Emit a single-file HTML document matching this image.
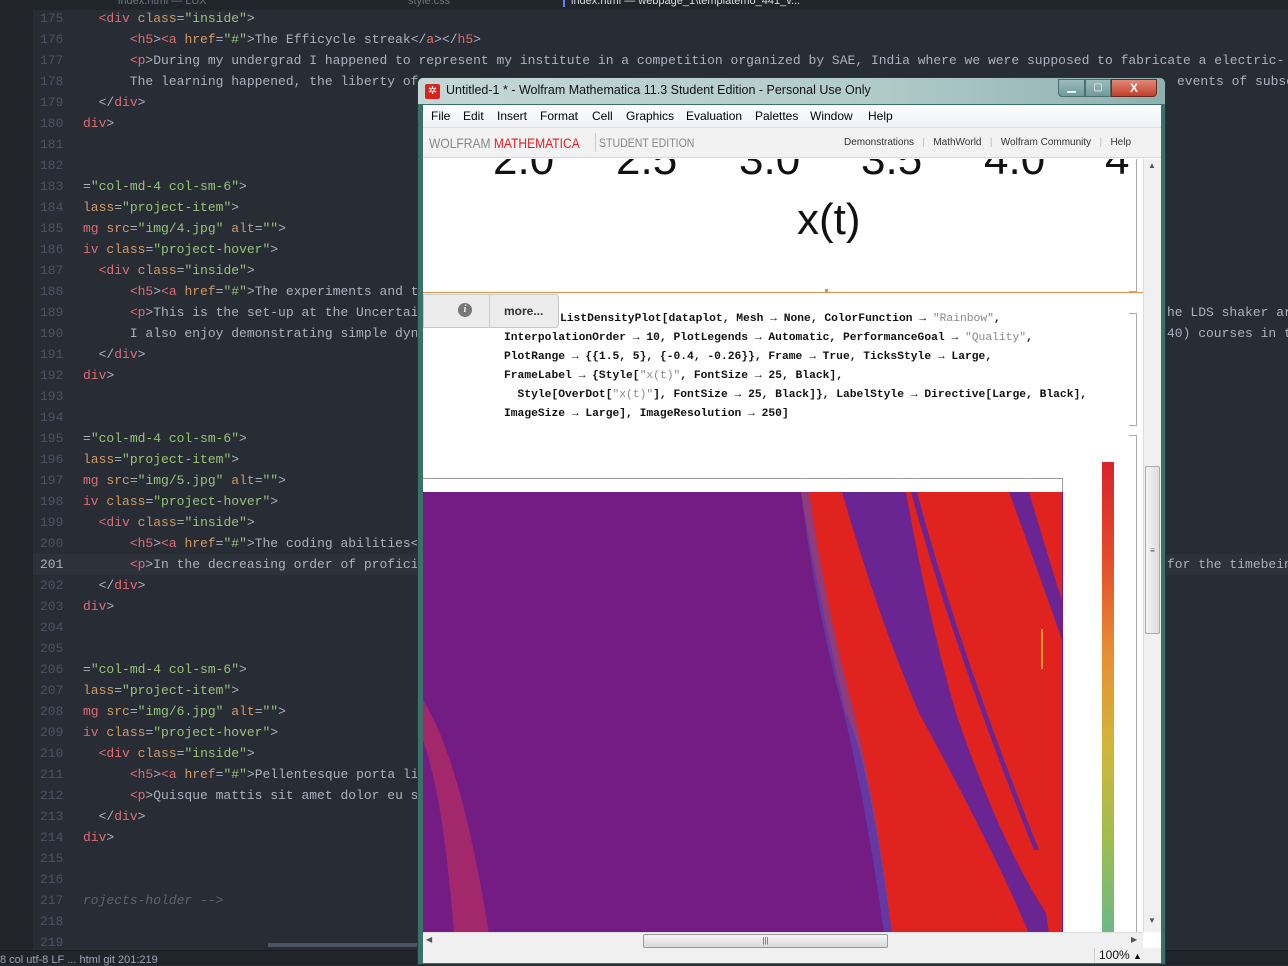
<!DOCTYPE html>
<html><head><meta charset="utf-8"><style>
*{margin:0;padding:0;box-sizing:border-box}
body{width:1288px;height:965px;overflow:hidden;background:#282c34;position:relative;font-family:"Liberation Sans",sans-serif}
.side{position:absolute;left:0;top:0;width:33px;height:950px;background:#21252b}
.tabs{position:absolute;left:33px;top:0;width:1255px;height:10px;background:#21252b;font-size:11px;color:#6b717d;overflow:hidden}
.tabs span{position:absolute;top:-5px}
.code{position:absolute;left:33px;top:8px;width:1255px;font-family:"Liberation Mono",monospace;font-size:13px;color:#abb2bf}
.ln{position:relative;height:21px;line-height:21px;white-space:pre}
.ln .n{position:absolute;left:7px;width:23px;text-align:right;color:#4b5263}
.ln .t{position:absolute;left:50px}
.cur{background:#2c313a}
.cur .n{color:#abb2bf}
.r{color:#e06c75}.o{color:#d19a66}.g{color:#98c379}.c{color:#5c6370;font-style:italic}
.status{position:absolute;left:0;top:950px;width:1288px;height:15px;background:#21252b;border-top:1px solid #181a1f;font-size:11px;color:#9da5b4}
.win{position:absolute;left:417px;top:77px;width:749px;height:888px;background:#3b7169;border:1px solid #1d3a36;border-radius:6px 6px 0 0}
.title{position:absolute;left:0;top:0;width:747px;height:26px;background:linear-gradient(90deg,#c4d7d7,#b2cbcb 60%,#8fb0b0);border-radius:5px 5px 0 0;font-size:12.5px;color:#111}
.inner{position:absolute;left:5px;top:27px;width:738px;height:858px;background:#fff;overflow:hidden}
.menu{position:absolute;left:0;top:0;width:738px;height:22px;background:linear-gradient(#fdfdfe,#eef1f7);font-size:12px;color:#000}
.menu span{position:absolute;top:4px}
.tool{position:absolute;left:0;top:22px;width:738px;height:31px;background:#f2f2f2;border-top:1px solid #dde;border-bottom:1px solid #d6d6d6}
.mono{font-family:"Liberation Mono",monospace;font-weight:bold;font-size:11.3px;color:#111;position:absolute;white-space:pre}
.s{color:#888;font-weight:normal}
.big{position:absolute;top:-24px;font-size:44px;color:#111}
</style></head><body>
<div class="side"></div>
<div class="tabs"><span style="left:85px">index.html — LUX</span><span style="left:375px">style.css</span><span style="left:530px;color:#d7dae0;border-left:2px solid #568af2;padding-left:6px">index.html — webpage_1\templatemo_441_v...</span></div>
<div class="code">
<div class="ln"><span class="n">175</span><span class="t">  <span class="r">&lt;div</span> <span class="o">class</span>=<span class="g">"inside"</span>&gt;</span></div>
<div class="ln"><span class="n">176</span><span class="t">      <span class="r">&lt;h5</span>&gt;<span class="r">&lt;a</span> <span class="o">href</span>=<span class="g">"#"</span>&gt;The Efficycle streak&lt;/<span class="r">a</span>&gt;&lt;/<span class="r">h5</span>&gt;</span></div>
<div class="ln"><span class="n">177</span><span class="t">      <span class="r">&lt;p</span>&gt;During my undergrad I happened to represent my institute in a competition organized by SAE, India where we were supposed to fabricate a electric- ma</span></div>
<div class="ln"><span class="n">178</span><span class="t">      The learning happened, the liberty of</span><span class="t" style="left:1144px">events of subse</span></div>
<div class="ln"><span class="n">179</span><span class="t">  &lt;/<span class="r">div</span>&gt;</span></div>
<div class="ln"><span class="n">180</span><span class="t"><span class="r">div</span>&gt;</span></div>
<div class="ln"><span class="n">181</span></div>
<div class="ln"><span class="n">182</span></div>
<div class="ln"><span class="n">183</span><span class="t">=<span class="g">"col-md-4 col-sm-6"</span>&gt;</span></div>
<div class="ln"><span class="n">184</span><span class="t"><span class="o">lass</span>=<span class="g">"project-item"</span>&gt;</span></div>
<div class="ln"><span class="n">185</span><span class="t"><span class="r">mg</span> <span class="o">src</span>=<span class="g">"img/4.jpg"</span> <span class="o">alt</span>=<span class="g">""</span>&gt;</span></div>
<div class="ln"><span class="n">186</span><span class="t"><span class="r">iv</span> <span class="o">class</span>=<span class="g">"project-hover"</span>&gt;</span></div>
<div class="ln"><span class="n">187</span><span class="t">  <span class="r">&lt;div</span> <span class="o">class</span>=<span class="g">"inside"</span>&gt;</span></div>
<div class="ln"><span class="n">188</span><span class="t">      <span class="r">&lt;h5</span>&gt;<span class="r">&lt;a</span> <span class="o">href</span>=<span class="g">"#"</span>&gt;The experiments and te</span></div>
<div class="ln"><span class="n">189</span><span class="t">      <span class="r">&lt;p</span>&gt;This is the set-up at the Uncertai</span><span class="t" style="left:1134px">he LDS shaker ar</span></div>
<div class="ln"><span class="n">190</span><span class="t">      I also enjoy demonstrating simple dyn</span><span class="t" style="left:1134px">40) courses in t</span></div>
<div class="ln"><span class="n">191</span><span class="t">  &lt;/<span class="r">div</span>&gt;</span></div>
<div class="ln"><span class="n">192</span><span class="t"><span class="r">div</span>&gt;</span></div>
<div class="ln"><span class="n">193</span></div>
<div class="ln"><span class="n">194</span></div>
<div class="ln"><span class="n">195</span><span class="t">=<span class="g">"col-md-4 col-sm-6"</span>&gt;</span></div>
<div class="ln"><span class="n">196</span><span class="t"><span class="o">lass</span>=<span class="g">"project-item"</span>&gt;</span></div>
<div class="ln"><span class="n">197</span><span class="t"><span class="r">mg</span> <span class="o">src</span>=<span class="g">"img/5.jpg"</span> <span class="o">alt</span>=<span class="g">""</span>&gt;</span></div>
<div class="ln"><span class="n">198</span><span class="t"><span class="r">iv</span> <span class="o">class</span>=<span class="g">"project-hover"</span>&gt;</span></div>
<div class="ln"><span class="n">199</span><span class="t">  <span class="r">&lt;div</span> <span class="o">class</span>=<span class="g">"inside"</span>&gt;</span></div>
<div class="ln"><span class="n">200</span><span class="t">      <span class="r">&lt;h5</span>&gt;<span class="r">&lt;a</span> <span class="o">href</span>=<span class="g">"#"</span>&gt;The coding abilities&lt;</span></div>
<div class="ln cur"><span class="n">201</span><span class="t">      <span class="r">&lt;p</span>&gt;In the decreasing order of proficie</span><span class="t" style="left:1134px">for the timebein</span></div>
<div class="ln"><span class="n">202</span><span class="t">  &lt;/<span class="r">div</span>&gt;</span></div>
<div class="ln"><span class="n">203</span><span class="t"><span class="r">div</span>&gt;</span></div>
<div class="ln"><span class="n">204</span></div>
<div class="ln"><span class="n">205</span></div>
<div class="ln"><span class="n">206</span><span class="t">=<span class="g">"col-md-4 col-sm-6"</span>&gt;</span></div>
<div class="ln"><span class="n">207</span><span class="t"><span class="o">lass</span>=<span class="g">"project-item"</span>&gt;</span></div>
<div class="ln"><span class="n">208</span><span class="t"><span class="r">mg</span> <span class="o">src</span>=<span class="g">"img/6.jpg"</span> <span class="o">alt</span>=<span class="g">""</span>&gt;</span></div>
<div class="ln"><span class="n">209</span><span class="t"><span class="r">iv</span> <span class="o">class</span>=<span class="g">"project-hover"</span>&gt;</span></div>
<div class="ln"><span class="n">210</span><span class="t">  <span class="r">&lt;div</span> <span class="o">class</span>=<span class="g">"inside"</span>&gt;</span></div>
<div class="ln"><span class="n">211</span><span class="t">      <span class="r">&lt;h5</span>&gt;<span class="r">&lt;a</span> <span class="o">href</span>=<span class="g">"#"</span>&gt;Pellentesque porta lig</span></div>
<div class="ln"><span class="n">212</span><span class="t">      <span class="r">&lt;p</span>&gt;Quisque mattis sit amet dolor eu se</span></div>
<div class="ln"><span class="n">213</span><span class="t">  &lt;/<span class="r">div</span>&gt;</span></div>
<div class="ln"><span class="n">214</span><span class="t"><span class="r">div</span>&gt;</span></div>
<div class="ln"><span class="n">215</span></div>
<div class="ln"><span class="n">216</span></div>
<div class="ln"><span class="n">217</span><span class="t c">rojects-holder --&gt;</span></div>
<div class="ln"><span class="n">218</span></div>
<div class="ln"><span class="n">219</span></div>
</div>
<div style="position:absolute;left:268px;top:943px;width:150px;height:4px;background:#4b5263"></div>
<div class="status"><span style="position:absolute;left:0;top:3px">8 col  utf-8  LF  ...  html  git  201:219</span></div>

<div class="win">
 <div class="title">
  <div style="position:absolute;left:7px;top:6px;width:15px;height:15px;background:#d8241f;border-radius:2px;color:#fff;font-size:11px;line-height:15px;text-align:center">✲</div>
  <span style="position:absolute;left:28px;top:5px">Untitled-1 * - Wolfram Mathematica 11.3 Student Edition - Personal Use Only</span>
  <div style="position:absolute;left:640px;top:1px;width:27px;height:18px;background:linear-gradient(#9cbcbc,#6f9a9a);border:1px solid #4e6f6f;border-radius:0 0 0 4px;color:#fff;font-size:11px;text-align:center;line-height:14px">▁</div>
  <div style="position:absolute;left:667px;top:1px;width:26px;height:18px;background:linear-gradient(#9cbcbc,#6f9a9a);border:1px solid #4e6f6f;color:#fff;font-size:10px;text-align:center;line-height:16px">▢</div>
  <div style="position:absolute;left:693px;top:1px;width:46px;height:18px;background:linear-gradient(#e08a78,#c2402a);border:1px solid #6c2a20;border-radius:0 0 4px 0;color:#fff;font-size:12px;font-weight:bold;text-align:center;line-height:16px">X</div>
 </div>
 <div class="inner">
  <div class="menu"><span style="left:8px">File</span><span style="left:40px">Edit</span><span style="left:74px">Insert</span><span style="left:117px">Format</span><span style="left:169px">Cell</span><span style="left:203px">Graphics</span><span style="left:263px">Evaluation</span><span style="left:332px">Palettes</span><span style="left:387px">Window</span><span style="left:445px">Help</span></div>
  <div class="tool">
   <span style="position:absolute;left:6px;top:7px;font-size:14px;color:#888;transform:scaleX(0.86);transform-origin:0 0;white-space:nowrap">WOLFRAM <span style="color:#d9232a">MATHEMATICA</span></span>
   <span style="position:absolute;left:172px;top:5px;height:19px;border-left:1px solid #ccc"></span>
   <span style="position:absolute;left:176px;top:8px;font-size:12px;color:#888;transform:scaleX(0.88);transform-origin:0 0;white-space:nowrap">STUDENT EDITION</span>
   <span style="position:absolute;left:421px;top:9px;font-size:10px;color:#333;white-space:nowrap">Demonstrations &nbsp;&nbsp;<span style="color:#bbb">|</span>&nbsp;&nbsp; MathWorld &nbsp;&nbsp;<span style="color:#bbb">|</span>&nbsp;&nbsp; Wolfram Community &nbsp;&nbsp;<span style="color:#bbb">|</span>&nbsp;&nbsp; Help</span>
  </div>
  <div style="position:absolute;left:0;top:54px;width:720px;height:773px;overflow:hidden">
   <span class="big" style="left:-12px">)</span>
   <span class="big" style="left:70px">2.0</span>
   <span class="big" style="left:193px">2.5</span>
   <span class="big" style="left:316px">3.0</span>
   <span class="big" style="left:438px">3.5</span>
   <span class="big" style="left:561px">4.0</span>
   <span class="big" style="left:682px">4</span>
   <div style="position:absolute;left:374px;top:36px;font-size:44px;color:#111">x(t)</div>
   <div style="position:absolute;left:0;top:133px;width:720px;height:1px;background:#e0904a"></div>
   <div style="position:absolute;left:402px;top:130px;width:3px;height:4px;background:#e0904a"></div>
   <div style="position:absolute;left:0;top:135px;width:136px;height:34px;background:#ececec;border:1px solid #c8c8c8;border-radius:0 4px 4px 0"></div>
   <div style="position:absolute;left:66px;top:135px;width:1px;height:34px;background:#ccc"></div>
   <div style="position:absolute;left:35px;top:144px;width:14px;height:14px;border-radius:50%;background:#777;color:#fff;font-size:10px;font-style:italic;font-weight:bold;text-align:center;line-height:14px;font-family:'Liberation Serif',serif">i</div>
   <span style="position:absolute;left:81px;top:145px;font-size:12px;color:#333;font-weight:bold">more...</span>
   <div class="mono" style="left:137px;top:154px">ListDensityPlot[dataplot, Mesh → None, ColorFunction → <span class="s">"Rainbow"</span>,</div>
   <div class="mono" style="left:81px;top:173px">InterpolationOrder → 10, PlotLegends → Automatic, PerformanceGoal → <span class="s">"Quality"</span>,</div>
   <div class="mono" style="left:81px;top:192px">PlotRange → {{1.5, 5}, {-0.4, -0.26}}, Frame → True, TicksStyle → Large,</div>
   <div class="mono" style="left:81px;top:211px">FrameLabel → {Style[<span class="s">"x(t)"</span>, FontSize → 25, Black],</div>
   <div class="mono" style="left:81px;top:230px">  Style[OverDot[<span class="s">"x(t)"</span>], FontSize → 25, Black]}, LabelStyle → Directive[Large, Black],</div>
   <div class="mono" style="left:81px;top:249px">ImageSize → Large], ImageResolution → 250]</div>
   <div style="position:absolute;left:706px;top:0;width:8px;height:133px;border:1px solid #aaa;border-left:none;border-top:none"></div>
   <div style="position:absolute;left:706px;top:154px;width:8px;height:113px;border:1px solid #aaa;border-left:none"></div>
   <div style="position:absolute;left:706px;top:276px;width:8px;height:500px;border:1px solid #aaa;border-left:none;border-bottom:none"></div>
   <div style="position:absolute;left:0;top:319px;width:640px;height:15px;border:1px solid #999;border-left:none;background:#fff"></div>
   <svg style="position:absolute;left:0;top:333px" width="640" height="442" viewBox="424 492 640 442">
    <rect x="424" y="492" width="640" height="442" fill="#731d84"/>
    <path d="M802 492 L1063 492 L1063 934 L893 934 Q870 760 847 713 Q820 600 802 492Z" fill="#e0231f"/>
    <path d="M843 492 L907 492 Q930 620 957 713 Q1000 840 1047 913 L1050 934 L1030 934 Q1000 860 920 713 Q880 620 843 492Z" fill="#6a2592"/>
    <path d="M1010 492 L1030 492 Q1050 560 1063 600 L1063 640 Q1035 560 1010 492Z" fill="#6a2592"/>
    <path d="M912 492 L918 492 Q960 650 1040 850 L1035 850 Q955 650 912 492Z" fill="#6a2592"/>
    <path d="M802 492 L810 492 Q825 600 855 713 Q880 820 893 934 L885 934 Q870 820 845 713 Q815 600 802 492Z" fill="#5a4cb8" opacity=".6"/>
    <path d="M424 700 Q462 760 490 934 L455 934 Q445 800 424 740Z" fill="#c2305a" opacity=".6"/>
   </svg>
   <div style="position:absolute;left:679px;top:303px;width:12px;height:472px;background:linear-gradient(#d9232a,#e34a2b 20%,#e88d33 40%,#d3b53a 60%,#9fbd4e 80%,#6bb889)"></div>
   <div style="position:absolute;left:618px;top:470px;width:2px;height:40px;background:#e8962c"></div>
  </div>
  <div style="position:absolute;left:720px;top:54px;width:18px;height:773px;background:#f0f0f0;border-left:1px solid #ddd">
   <div style="position:absolute;left:4px;top:2px;font-size:8px;color:#555">▲</div>
   <div style="position:absolute;left:1px;top:307px;width:15px;height:168px;background:linear-gradient(90deg,#f4f4f4,#dcdcdc);border:1px solid #aaa;border-radius:2px;font-size:8px;color:#555;text-align:center;line-height:168px">≡</div>
   <div style="position:absolute;left:4px;top:757px;font-size:8px;color:#555">▼</div>
  </div>
  <div style="position:absolute;left:0;top:827px;width:720px;height:16px;background:#f0f0f0;border-top:1px solid #ddd">
   <div style="position:absolute;left:3px;top:2px;font-size:8px;color:#555">◀</div>
   <div style="position:absolute;left:220px;top:1px;width:245px;height:14px;background:linear-gradient(#f6f6f6,#d8d8d8);border:1px solid #999;border-radius:2px;font-size:8px;text-align:center;line-height:12px;color:#555">|||</div>
   <div style="position:absolute;left:708px;top:2px;font-size:8px;color:#555">▶</div>
  </div>
  <div style="position:absolute;left:0;top:843px;width:738px;height:15px;background:#f0f0f0">
   <span style="position:absolute;left:671px;top:0;font-size:12px;color:#111;border-left:1px solid #ccc;padding-left:4px">100% <span style="font-size:9px">▲</span></span>
  </div>
 </div>
</div>
</body></html>
